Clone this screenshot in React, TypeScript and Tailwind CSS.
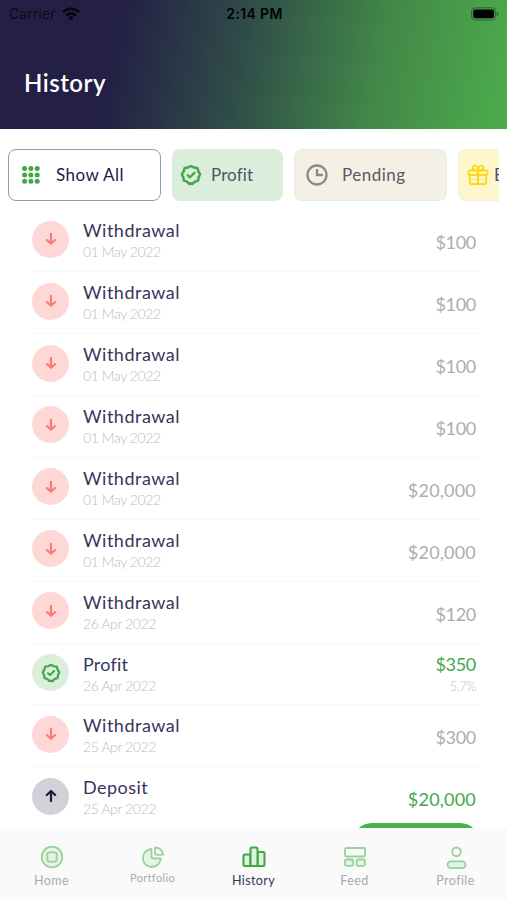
import type { ReactNode } from "react";

type Kind = "withdrawal" | "profit" | "deposit";

interface Transaction {
  kind: Kind;
  date: string;
  amount: string;
  rate?: string;
}

const TRANSACTIONS: Transaction[] = [
  { kind: "withdrawal", date: "01 May 2022", amount: "$100" },
  { kind: "withdrawal", date: "01 May 2022", amount: "$100" },
  { kind: "withdrawal", date: "01 May 2022", amount: "$100" },
  { kind: "withdrawal", date: "01 May 2022", amount: "$100" },
  { kind: "withdrawal", date: "01 May 2022", amount: "$20,000" },
  { kind: "withdrawal", date: "01 May 2022", amount: "$20,000" },
  { kind: "withdrawal", date: "26 Apr 2022", amount: "$120" },
  { kind: "profit", date: "26 Apr 2022", amount: "$350", rate: "5.7%" },
  { kind: "withdrawal", date: "25 Apr 2022", amount: "$300" },
  { kind: "deposit", date: "25 Apr 2022", amount: "$20,000" },
];

const TITLES = {
  withdrawal: { label: "Withdrawal", style: "tracking-[0.5px]" },
  profit: { label: "Profit", style: "tracking-[0.2px]" },
  deposit: { label: "Deposit", style: "tracking-[0.45px]" },
};

function BadgeIcon({ size }: { size: number }) {
  return (
    <svg width={size} height={size} viewBox="0 0 24 24" fill="none" stroke="#43a847" strokeWidth="2.7" strokeLinecap="round" strokeLinejoin="round">
      <path d="M12 2.2L15.3 3.9 18.9 4.3 20 7.9 22 11.2 20.4 14.5 19.8 18.1 16.3 19.2 13.7 21.8 12 21.3 10.3 21.8 7.7 19.2 4.2 18.1 3.6 14.5 2 11.2 4 7.9 5.1 4.3 8.7 3.9z" />
      <path d="M8.4 12.2l2.5 2.3 4.8-4.8" strokeWidth="2.5" />
    </svg>
  );
}

function DotsIcon() {
  return (
    <svg width="18" height="18" viewBox="0 0 18 18" fill="#43a847">
      {[2.6, 8.9, 15.2].map((y) => [2.6, 8.9, 15.2].map((x) => <circle key={`${x}-${y}`} cx={x} cy={y} r="2.5" />))}
    </svg>
  );
}

function ClockIcon() {
  return (
    <svg width="22" height="22" viewBox="0 0 22 22" fill="none" stroke="#8b8985" strokeWidth="2.3">
      <circle cx="11" cy="11" r="9.5" />
      <path d="M11 5v6h6" />
    </svg>
  );
}

function GiftIcon() {
  return (
    <svg width="22" height="22" viewBox="0 0 22 22" fill="none" stroke="#fcd912" strokeWidth="1.9" strokeLinejoin="round">
      <rect x="1.5" y="6.5" width="19" height="4.5" rx="1" />
      <path d="M2.8 11v7.5c0 .9.6 1.5 1.5 1.5h13.4c.9 0 1.5-.6 1.5-1.5V11M11 6.5V20M11 6.5C6.5 6.5 5.5 5 5.5 3.6S8 .9 9.3 2.1C10.4 3.1 11 4.7 11 6.5c0-1.8.6-3.4 1.7-4.4 1.3-1.2 3.8.1 3.8 1.5S15.5 6.5 11 6.5" />
      <path d="M3 15.3h16" strokeOpacity=".35" />
    </svg>
  );
}

function ArrowIcon({ up }: { up?: boolean }) {
  return (
    <svg width="12" height="14" viewBox="0 0 12 14" fill="none" stroke={up ? "#211d43" : "#fb7976"} strokeWidth={up ? 2.3 : 2.1} strokeLinecap="round" strokeLinejoin="round">
      <path d={up ? "M6 12V2.5M1.8 6L6 2l4.2 4" : "M6 1.8v9.5M1.9 8L6 11.8 10.1 8"} />
    </svg>
  );
}

function Avatar({ kind }: { kind: Kind }) {
  const base = "flex size-[37px] shrink-0 items-center justify-center rounded-full";
  if (kind === "profit") return <div className={`${base} bg-[#daeedb]`}><BadgeIcon size={20} /></div>;
  if (kind === "deposit") return <div className={`${base} bg-[#d2d1da]`}><ArrowIcon up /></div>;
  return <div className={`${base} bg-[#fdd8d7]`}><ArrowIcon /></div>;
}

function StatusBar() {
  return (
    <div className="grid h-[27px] grid-cols-3 items-center pr-[7px] pl-[9px] font-['Inter',sans-serif] text-[14px] text-[#0b0d16]">
      <div className="flex items-center gap-[6px]">
        <span className="tracking-[0.1px]">Carrier</span>
        <svg width="18" height="14" viewBox="0 0 18 14" fill="none" stroke="#05060c" strokeWidth="2.6">
          <path d="M1 5.1a11.4 11.4 0 0 1 16 0M4 8.4a7.2 7.2 0 0 1 10 0" />
          <path d="M9 13.5L6.2 10.7a4 4 0 0 1 5.6 0z" fill="#05060c" stroke="none" />
        </svg>
      </div>
      <span className="text-center font-semibold tracking-[0.35px] whitespace-nowrap text-black">2:14 PM</span>
      <div className="flex justify-end">
        <svg width="29" height="14" viewBox="0 0 30 14">
          <rect x=".6" y=".6" width="25" height="12.5" rx="3.6" fill="none" stroke="#000" strokeOpacity=".4" />
          <rect x="2.3" y="2.3" width="21.6" height="9.1" rx="2.2" />
          <path d="M27 5c1.7.4 1.7 3.5 0 4z" fillOpacity=".45" />
        </svg>
      </div>
    </div>
  );
}

function Row({ item }: { item: Transaction }) {
  const title = TITLES[item.kind];
  return (
    <div className="flex h-[61.9px] shrink-0 border-b border-[#f6f9f9]">
      <div className="pt-[10.5px]"><Avatar kind={item.kind} /></div>
      <div className="ml-[14px] flex-1">
        <div className={`mt-[8px] text-[18px] leading-6 text-[#39355a] ${title.style}`}>{title.label}</div>
        <div className="text-[14px] leading-5 font-light tracking-[-0.4px] text-[#bcbcc0]">{item.date}</div>
      </div>
      <div className="pr-1 text-right">
        <div className={`text-[18px] leading-6 ${item.kind === "withdrawal" ? "text-[#adadad]" : "text-[#43a847]"} ${item.amount.length > 4 ? "tracking-[0.2px]" : "tracking-[-0.3px]"} ${item.rate ? "mt-[8px]" : "mt-[20px]"}`}>
          {item.amount}
        </div>
        {item.rate && <div className="text-[13px] leading-5 font-light tracking-[-0.5px] text-[#bcbcc0]">{item.rate}</div>}
      </div>
    </div>
  );
}

function NavItem({ label, active, small, children }: { label: string; active?: boolean; small?: boolean; children: ReactNode }) {
  return (
    <div className={`flex flex-1 flex-col items-center pt-[17px] ${active ? "text-[#39355a]" : "text-[#aaa9b1]"}`}>
      <svg width="24" height="24" viewBox="0 0 24 24" fill="none" stroke={active ? "#43a847" : "#98d19a"} strokeWidth={active ? 2.1 : 1.8} strokeLinejoin="round">
        {children}
      </svg>
      <span className={small ? "mt-px text-[11px] leading-4 tracking-[0.35px]" : "mt-1 text-[12.5px] leading-4 tracking-[0.4px]"}>{label}</span>
    </div>
  );
}

export default function App() {
  return (
    <div className="flex h-[900px] w-[507px] flex-col overflow-hidden bg-white font-['Lato',sans-serif]">
      <header className="h-[129px] shrink-0 bg-[linear-gradient(101deg,#231f45_23%,#315249_50%,#438849_74%,#4caa4b_98%)]">
        <StatusBar />
        <h1 className="mt-[40px] ml-6 text-[24px] leading-8 font-semibold tracking-[0.5px] text-white">History</h1>
      </header>

      <div className="mt-[20px] mr-2 ml-2 flex h-[52px] shrink-0 gap-[11px] overflow-hidden text-[17px]">
        <div className="flex w-[153px] shrink-0 items-center gap-[16px] rounded-lg border border-[#9a98a9] pl-[13px] text-[#211d43]">
          <DotsIcon /><span className="tracking-[0.45px]">Show All</span>
        </div>
        <div className="flex w-[111px] shrink-0 items-center gap-[9px] rounded-lg bg-[#daeedb] pl-[8px] text-[#4b5563]">
          <BadgeIcon size={22} /><span className="tracking-[0.1px]">Profit</span>
        </div>
        <div className="flex w-[153px] shrink-0 items-center gap-[14px] rounded-lg border border-[#e5eee4] bg-[#f4f0e6] pl-[11px] text-[#5d5764]">
          <ClockIcon /><span className="tracking-[0.5px]">Pending</span>
        </div>
        <div className="flex w-[111px] shrink-0 items-center gap-[5px] rounded-lg border border-[#eef2d9] bg-[#fff6ce] pl-[8px] text-[#565060]">
          <GiftIcon /><span>Bonus</span>
        </div>
      </div>

      <main className="relative min-h-0 flex-1 overflow-hidden pt-[9.3px] pr-[27px] pl-8">
        {TRANSACTIONS.map((item, i) => <Row key={i} item={item} />)}
        <div className="absolute top-[621.5px] left-[352px] h-10 w-[128px] rounded-full bg-[#4caf50]" />
      </main>

      <nav className="flex h-[72px] shrink-0 bg-[#fafafa] px-[1px]">
        <NavItem label="Home">
          <circle cx="12" cy="12" r="10.3" fill="#e3f4e4" />
          <rect x="7.3" y="7.3" width="9.4" height="9.4" rx="2.2" />
        </NavItem>
        <NavItem label="Portfolio" small>
          <path d="M10.3 4a9 9 0 1 0 9.5 9.5l-7.5-.1c-1.1 0-1.7-.6-1.7-1.7z" fill="#e3f4e4" />
          <path d="M14 2.5a8 8 0 0 1 8.2 7.2L16 9.9c-1.2 0-1.9-.6-1.9-1.8z" />
        </NavItem>
        <NavItem label="History" active>
          <rect x="1.5" y="9.5" width="7" height="11.5" rx="1.5" fill="#dff2e0" />
          <rect x="15.5" y="7" width="7" height="14" rx="1.5" fill="#dff2e0" />
          <rect x="8.5" y="2.5" width="7" height="18.5" rx="1.5" fill="#dff2e0" />
        </NavItem>
        <NavItem label="Feed">
          <rect x="2" y="3" width="20" height="8.5" rx="1.5" />
          <rect x="2" y="14.5" width="8.2" height="6.3" rx="1.5" fill="#e3f4e4" />
          <rect x="13.5" y="14.5" width="8.5" height="6.3" rx="1.5" fill="#e3f4e4" />
        </NavItem>
        <NavItem label="Profile">
          <circle cx="12.5" cy="6.8" r="4.3" />
          <rect x="3.5" y="16.3" width="18" height="6.8" rx="3.4" fill="#e3f4e4" />
        </NavItem>
      </nav>
    </div>
  );
}
